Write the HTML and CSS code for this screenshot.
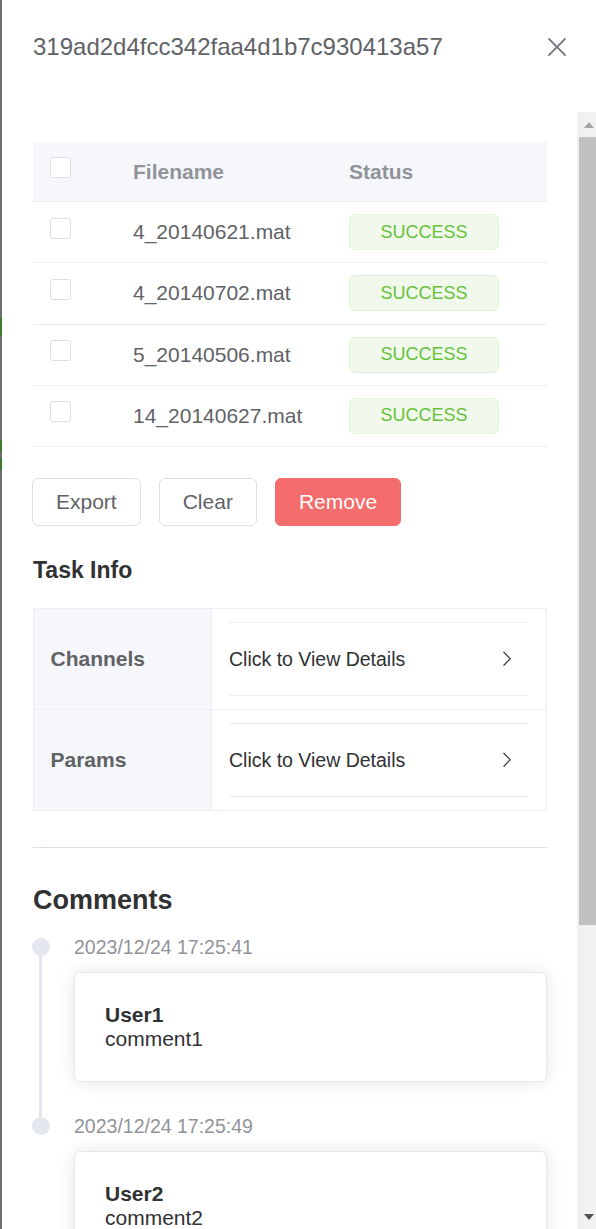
FILE: index.html
```html
<!DOCTYPE html>
<html lang="en">
<head>
<meta charset="utf-8">
<title>Task Detail</title>
<link rel="stylesheet" href="styles.css">
</head>
<body>
<aside class="drawer">
  <header class="drawer-header">
    <span class="drawer-title">319ad2d4fcc342faa4d1b7c930413a57</span>
    <button class="close-btn" aria-label="Close">
      <svg viewBox="0 0 1024 1024" width="30" height="30"><path fill="#73767a" d="M764.288 214.592 512 466.88 259.712 214.592a31.936 31.936 0 0 0-45.12 45.12L466.752 512 214.528 764.224a31.936 31.936 0 1 0 45.12 45.184L512 557.184l252.288 252.288a31.936 31.936 0 0 0 45.12-45.12L557.12 512.064l252.288-252.352a31.936 31.936 0 1 0-45.120-45.184z"/></svg>
    </button>
  </header>
  <div class="drawer-scroll">
    <div class="drawer-body">
      <div class="file-table">
        <div class="tr th">
          <div class="td sel"><span class="checkbox"></span></div>
          <div class="td">Filename</div>
          <div class="td">Status</div>
        </div>
        <div class="tr">
          <div class="td sel"><span class="checkbox"></span></div>
          <div class="td">4_20140621.mat</div>
          <div class="td"><span class="tag">SUCCESS</span></div>
        </div>
        <div class="tr">
          <div class="td sel"><span class="checkbox"></span></div>
          <div class="td">4_20140702.mat</div>
          <div class="td"><span class="tag">SUCCESS</span></div>
        </div>
        <div class="tr">
          <div class="td sel"><span class="checkbox"></span></div>
          <div class="td">5_20140506.mat</div>
          <div class="td"><span class="tag">SUCCESS</span></div>
        </div>
        <div class="tr">
          <div class="td sel"><span class="checkbox"></span></div>
          <div class="td">14_20140627.mat</div>
          <div class="td"><span class="tag">SUCCESS</span></div>
        </div>
      </div>

      <div class="actions">
        <button class="btn">Export</button>
        <button class="btn">Clear</button>
        <button class="btn btn-danger">Remove</button>
      </div>

      <h4 class="section-title">Task Info</h4>
      <div class="desc">
        <div class="desc-row">
          <div class="desc-label">Channels</div>
          <div class="desc-content">
            <div class="collapse">
              <div class="collapse-header">
                <span>Click to View Details</span>
                <svg class="arrow" viewBox="0 0 1024 1024"><path fill="#303133" d="M340.864 149.312a30.592 30.592 0 0 0 0 42.752L652.736 512 340.864 831.872a30.592 30.592 0 0 0 0 42.752 29.12 29.12 0 0 0 41.728 0L714.24 534.336a32 32 0 0 0 0-44.672L382.592 149.376a29.12 29.12 0 0 0-41.728 0z"/></svg>
              </div>
            </div>
          </div>
        </div>
        <div class="desc-row">
          <div class="desc-label">Params</div>
          <div class="desc-content">
            <div class="collapse">
              <div class="collapse-header">
                <span>Click to View Details</span>
                <svg class="arrow" viewBox="0 0 1024 1024"><path fill="#303133" d="M340.864 149.312a30.592 30.592 0 0 0 0 42.752L652.736 512 340.864 831.872a30.592 30.592 0 0 0 0 42.752 29.12 29.12 0 0 0 41.728 0L714.24 534.336a32 32 0 0 0 0-44.672L382.592 149.376a29.12 29.12 0 0 0-41.728 0z"/></svg>
              </div>
            </div>
          </div>
        </div>
      </div>

      <div class="divider"></div>

      <h3 class="comments-title">Comments</h3>
      <ul class="timeline">
        <li class="tl-item">
          <span class="tl-tail"></span>
          <span class="tl-dot"></span>
          <div class="tl-time">2023/12/24 17:25:41</div>
          <div class="tl-card"><b>User1</b><br>comment1</div>
        </li>
        <li class="tl-item">
          <span class="tl-dot"></span>
          <div class="tl-time">2023/12/24 17:25:49</div>
          <div class="tl-card"><b>User2</b><br>comment2</div>
        </li>
      </ul>
    </div>
    <div class="scrollbar" aria-hidden="true">
      <div class="sb-btn">
        <svg width="10" height="6" viewBox="0 0 10 6"><path d="M5 0L10 6H0z" fill="#a3a3a3"/></svg>
      </div>
      <div class="sb-thumb"></div>
      <div class="sb-track"></div>
      <div class="sb-btn">
        <svg width="10" height="6" viewBox="0 0 10 6"><path d="M0 0H10L5 6z" fill="#505050"/></svg>
      </div>
    </div>
  </div>
</aside>
</body>
</html>
```
FILE: styles.css
```css
html, body {
  margin: 0;
  height: 1229px;
  overflow: hidden;
}

body {
  font-family: "Liberation Sans", Arial, sans-serif;
  background: linear-gradient(#6e6e6e 0 318px, #3d7a2c 318px 336px, #6e6e6e 336px 440px, #3d7a2c 440px 452px, #6e6e6e 452px 458px, #3d7a2c 458px 470px, #6e6e6e 470px);
}

.drawer {
  margin-left: 2px;
  height: 1229px;
  background: #fff;
  display: flex;
  flex-direction: column;
}

/* header */
.drawer-header {
  display: flex;
  align-items: center;
  justify-content: space-between;
  padding: 30px 30px 0 31px;
  height: 34px;
  margin-bottom: 48px;
  flex: none;
}

.drawer-title {
  font-size: 24px;
  line-height: 34px;
  color: #606266;
}

.close-btn {
  border: 0;
  background: none;
  padding: 0;
  width: 30px;
  height: 30px;
  display: flex;
  margin-right: -6px;
  cursor: pointer;
}

/* scroll area */
.drawer-scroll {
  flex: 1;
  min-height: 0;
  display: flex;
}

.drawer-body {
  flex: 1;
  min-width: 0;
  overflow: hidden;
  padding: 30px 30px 30px 31px;
}

.scrollbar {
  flex: none;
  width: 19px;
  background: #f1f1f1;
  display: flex;
  flex-direction: column;
}

.sb-btn {
  height: 25px;
  flex: none;
  display: flex;
  align-items: center;
  padding-left: 7px;
}

.sb-thumb {
  flex: none;
  height: 788px;
  margin-left: 2px;
  background: #c1c1c1;
}

.sb-track {
  flex: 1;
}

/* table */
.tr {
  display: grid;
  grid-template-columns: 82px 1fr 1fr;
  align-items: center;
  height: 61.25px;
  box-sizing: border-box;
  border-bottom: 1px solid #ebeef5;
}

.tr.th {
  height: 60px;
  background: #f5f7fa;
}

.td {
  padding: 0 18px;
  font-size: 21px;
  color: #606266;
  white-space: nowrap;
}

.th .td {
  color: #909399;
  font-weight: bold;
}

.td.sel {
  display: flex;
  align-items: center;
  padding-left: 17px;
}

.checkbox {
  display: block;
  width: 21px;
  height: 21px;
  box-sizing: border-box;
  border: 1px solid #dcdfe6;
  border-radius: 3px;
  background: #fff;
  margin-bottom: 8px;
}

.tag {
  display: inline-flex;
  align-items: center;
  justify-content: center;
  width: 150px;
  height: 36px;
  box-sizing: border-box;
  background: #f0f9eb;
  border: 1px solid #e1f3d8;
  border-radius: 6px;
  color: #67c23a;
  font-size: 18px;
  vertical-align: middle;
}

/* actions */
.actions {
  display: flex;
  gap: 18px;
  margin-top: 31px;
}

.btn {
  height: 48px;
  padding: 0 23px;
  font-family: inherit;
  font-size: 21px;
  color: #606266;
  background: #fff;
  border: 1px solid #dcdfe6;
  border-radius: 6px;
  cursor: pointer;
}

.btn:first-child {
  margin-left: -1px;
}

.btn-danger {
  background: #f56c6c;
  border-color: #f56c6c;
  color: #fff;
}

/* task info */
.section-title {
  margin: 28px 0 22px;
  font-size: 23px;
  line-height: 32px;
  font-weight: bold;
  color: #303133;
}

.desc {
  border: 1px solid #ebeef5;
}

.desc-row {
  display: grid;
  grid-template-columns: 178px 1fr;
}

.desc-row + .desc-row {
  border-top: 1px solid #ebeef5;
}

.desc-label {
  display: flex;
  align-items: center;
  padding: 0 16.5px;
  background: #f5f7fa;
  border-right: 1px solid #ebeef5;
  font-size: 21px;
  font-weight: bold;
  color: #606266;
}

.desc-content {
  padding: 13px 18px 13px 17px;
}

.collapse {
  border-top: 1px solid #ebeef5;
  border-bottom: 1px solid #ebeef5;
}

.collapse-header {
  height: 72px;
  display: flex;
  align-items: center;
  font-size: 19.5px;
  color: #303133;
}

.arrow {
  width: 19.5px;
  height: 19.5px;
  margin: 0 12px 0 auto;
}

.divider {
  height: 1px;
  background: #dcdfe6;
  margin: 36px 0;
}

/* comments */
.comments-title {
  margin: 0 0 18px;
  font-size: 27px;
  line-height: 32px;
  font-weight: bold;
  color: #303133;
}

.timeline {
  list-style: none;
  margin: 0;
  padding: 0;
}

.tl-item {
  position: relative;
  padding: 0 0 31px 41px;
}

.tl-tail {
  position: absolute;
  left: 6px;
  top: 13px;
  width: 3px;
  height: 100%;
  background: #e4e7ed;
}

.tl-dot {
  position: absolute;
  left: -1px;
  top: 4px;
  width: 18px;
  height: 18px;
  border-radius: 50%;
  background: #e4e7ed;
}

.tl-time {
  height: 26px;
  line-height: 26px;
  margin-bottom: 12px;
  font-size: 19.5px;
  color: #909399;
}

.tl-card {
  border: 1px solid #e4e7ed;
  border-radius: 6px;
  padding: 30px;
  background: #fff;
  box-shadow: 0 0 18px rgba(0, 0, 0, 0.1);
  font-size: 21px;
  line-height: 24px;
  color: #303133;
}
```
